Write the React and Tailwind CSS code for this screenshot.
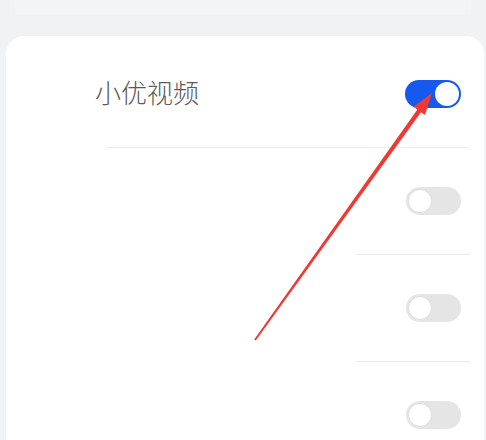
const rows = [
  { label: '小优视频', on: true },
  { label: '', on: false },
  { label: '', on: false },
  { label: '', on: false },
]

function Toggle({ on }) {
  return on ? (
    <div className="flex h-[28px] w-[56px] items-center justify-end rounded-full bg-[#1559ef] p-[2px]">
      <div className="h-[24px] w-[24px] rounded-full bg-white" />
    </div>
  ) : (
    <div className="flex h-[28px] w-[55px] items-center rounded-full bg-[#e5e5e5] p-[2px]">
      <div className="h-[24px] w-[24px] rounded-full border border-[#dedede] bg-white" />
    </div>
  )
}

export default function App() {
  return (
    <div
      className="relative h-[440px] w-[486px] overflow-hidden bg-[#f1f2f4]"
      style={{ fontFamily: '"Noto Sans CJK SC", "Noto Sans", sans-serif' }}
    >
      <div className="mx-[15px] h-[15px] bg-[#f3f4f5]" />
      <div className="ml-[6px] mt-[21px] h-[420px] w-[478px] rounded-t-[18px] bg-white pt-[5px]">
        {rows.map((row, i) => (
          <div key={i}>
            <div className="flex h-[106px] items-center justify-between pl-[89px] pr-[23px]">
              <span className="-mt-[4px] text-[26px] font-light leading-none text-[#5a5a5a]">{row.label}</span>
              <Toggle on={row.on} />
            </div>
            {i < rows.length - 1 && (
              <div
                className={
                  i === 0
                    ? 'ml-[100px] mr-[16px] h-px bg-[#ececec]'
                    : 'ml-[349px] mr-[14px] h-px bg-[#ececec]'
                }
              />
            )}
          </div>
        ))}
      </div>

      {/* red annotation arrow */}
      <svg className="pointer-events-none absolute left-0 top-0" width="486" height="440">
        <polygon
          fill="#ee3a35"
          points="432,93 424.9,115 421,112.3 255.8,340.6 254.2,339.4 417.4,109.5 413.5,106.8"
        />
      </svg>
    </div>
  )
}
